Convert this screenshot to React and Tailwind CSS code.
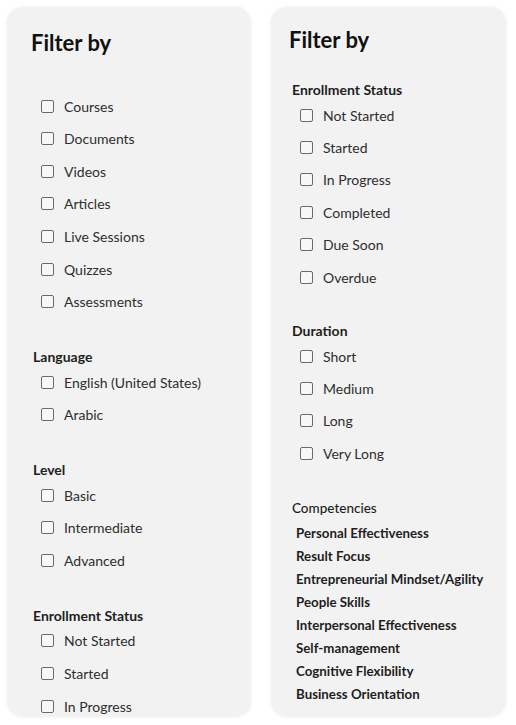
import React from "react";

const Box = () => (
  <span className="inline-block w-[13px] h-[13px] border-[1.5px] border-[#6a6a6a] rounded-[2px] bg-[#f7f7f7] shrink-0" />
);

const Row = ({ label, h }) => (
  <div className={`flex items-center ${h} gap-[10px] text-[14px] text-[#2e2e2e]`}>
    <Box />
    <span>{label}</span>
  </div>
);

const Header = ({ children, mt }) => (
  <div className={`${mt} h-[18px] leading-[18px] text-[14px] font-bold text-[#1e1e1e]`}>{children}</div>
);

export default function App() {
  const L = "h-[32.67px]";
  const R = "h-[32.4px]";
  return (
    <div
      className="flex gap-[22px] pl-[8px] pt-[8px] bg-white w-[516px] h-[725px]"
      style={{ fontFamily: "Lato, 'Open Sans', sans-serif" }}
    >
      <div className="w-[242px] h-[708px] overflow-hidden rounded-[15px] bg-[#f2f2f2] shadow-[0_0_4px_rgba(0,0,0,0.12)] pl-[23px] pt-[21px]">
        <div className="text-[22px] leading-[28px] font-bold text-[#111]">Filter by</div>
        <div className="mt-[32.7px] pl-[10px]">
          {["Courses", "Documents", "Videos", "Articles", "Live Sessions", "Quizzes", "Assessments"].map((i) => (
            <Row key={i} label={i} h={L} />
          ))}
        </div>
        <div className="pl-[2px]">
          <Header mt="mt-[29.7px]">Language</Header>
          <div className="pl-[8px]">
            {["English (United States)", "Arabic"].map((i) => (
              <Row key={i} label={i} h={L} />
            ))}
          </div>
          <Header mt="mt-[29.7px]">Level</Header>
          <div className="pl-[8px]">
            {["Basic", "Intermediate", "Advanced"].map((i) => (
              <Row key={i} label={i} h={L} />
            ))}
          </div>
          <Header mt="mt-[29.7px]">Enrollment Status</Header>
          <div className="pl-[8px]">
            {["Not Started", "Started", "In Progress"].map((i) => (
              <Row key={i} label={i} h={L} />
            ))}
          </div>
        </div>
      </div>
      <div className="w-[233px] h-[708px] overflow-hidden rounded-[15px] bg-[#f2f2f2] shadow-[0_0_4px_rgba(0,0,0,0.12)] pl-[17px] pt-[18px]">
        <div className="text-[22px] leading-[28px] font-bold text-[#111]">Filter by</div>
        <div className="pl-[3px]">
          <Header mt="mt-[27px]">Enrollment Status</Header>
          <div className="pl-[8px]">
            {["Not Started", "Started", "In Progress", "Completed", "Due Soon", "Overdue"].map((i) => (
              <Row key={i} label={i} h={R} />
            ))}
          </div>
          <Header mt="mt-[28.6px]">Duration</Header>
          <div className="pl-[8px]">
            {["Short", "Medium", "Long", "Very Long"].map((i) => (
              <Row key={i} label={i} h={R} />
            ))}
          </div>
          <div className="mt-[29.4px] h-[18px] leading-[18px] text-[13.5px] font-medium text-[#1e1e1e]">Competencies</div>
          <div className="mt-[5.6px] pl-[4px]">
            {[
              "Personal Effectiveness",
              "Result Focus",
              "Entrepreneurial Mindset/Agility",
              "People Skills",
              "Interpersonal Effectiveness",
              "Self-management",
              "Cognitive Flexibility",
              "Business Orientation",
            ].map((i) => (
              <div key={i} className="h-[22.86px] leading-[22.86px] text-[13.3px] font-bold text-[#1e1e1e]">
                {i}
              </div>
            ))}
          </div>
        </div>
      </div>
    </div>
  );
}
